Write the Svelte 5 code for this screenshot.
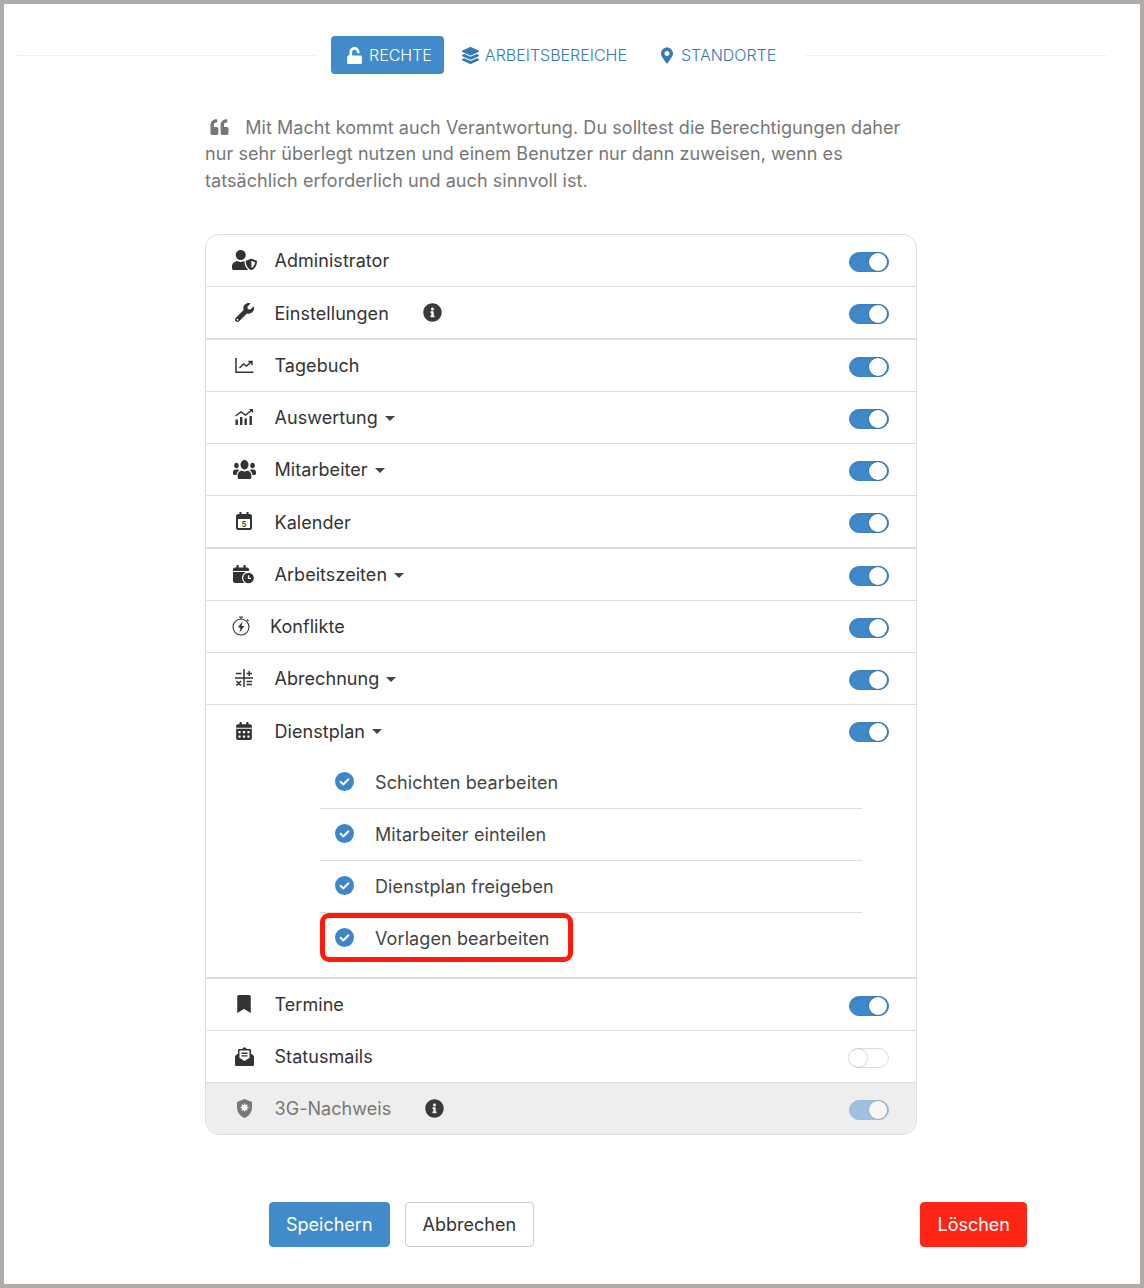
<script>
  const c = (x, y, r) => `M${x - r} ${y}a${r} ${r} 0 1 0 ${r * 2} 0a${r} ${r} 0 1 0 ${-r * 2} 0z`;

  const fa = (w, h, vb, d) => ({ w, h, vb, parts: [{ cls: 'f', d }] });

  const calendarAlt = 'M0 464c0 26.5 21.5 48 48 48h352c26.5 0 48-21.5 48-48V192H0v272zm320-196c0-6.6 5.4-12 12-12h40c6.6 0 12 5.4 12 12v40c0 6.6-5.4 12-12 12h-40c-6.6 0-12-5.4-12-12v-40zm0 128c0-6.6 5.4-12 12-12h40c6.6 0 12 5.4 12 12v40c0 6.6-5.4 12-12 12h-40c-6.6 0-12-5.4-12-12v-40zM192 268c0-6.6 5.4-12 12-12h40c6.6 0 12 5.4 12 12v40c0 6.6-5.4 12-12 12h-40c-6.6 0-12-5.4-12-12v-40zm0 128c0-6.6 5.4-12 12-12h40c6.6 0 12 5.4 12 12v40c0 6.6-5.4 12-12 12h-40c-6.6 0-12-5.4-12-12v-40zM64 268c0-6.6 5.4-12 12-12h40c6.6 0 12 5.4 12 12v40c0 6.6-5.4 12-12 12H76c-6.6 0-12-5.4-12-12v-40zm0 128c0-6.6 5.4-12 12-12h40c6.6 0 12 5.4 12 12v40c0 6.6-5.4 12-12 12H76c-6.6 0-12-5.4-12-12v-40zM400 64h-48V16c0-8.8-7.2-16-16-16h-32c-8.8 0-16 7.2-16 16v48H160V16c0-8.8-7.2-16-16-16h-32c-8.8 0-16 7.2-16 16v48H48C21.5 64 0 85.5 0 112v48h448v-48c0-26.5-21.5-48-48-48z';
  const infoCircle = 'M256 8C119.043 8 8 119.083 8 256c0 136.997 111.043 248 248 248s248-111.003 248-248C504 119.083 392.957 8 256 8zm0 110c23.196 0 42 18.804 42 42s-18.804 42-42 42-42-18.804-42-42 18.804-42 42-42zm56 254c0 6.627-5.373 12-12 12h-88c-6.627 0-12-5.373-12-12v-24c0-6.627 5.373-12 12-12h12v-64h-12c-6.627 0-12-5.373-12-12v-24c0-6.627 5.373-12 12-12h64c6.627 0 12 5.373 12 12v100h12c6.627 0 12 5.373 12 12v24z';

  const icons = {
    userShield: fa(25, 20, '0 0 640 512', 'M622.3 271.1l-115.2-45c-4.1-1.6-12.6-3.7-22.2 0l-115.2 45c-10.7 4.2-17.7 14-17.7 24.9 0 111.6 68.7 188.8 132.9 213.9 9.6 3.7 18 1.6 22.2 0C558.4 489.9 640 420.5 640 296c0-10.9-7-20.7-17.7-24.9zM496 462.4V273.3l95.5 37.3c-5.6 87.1-60.9 135.4-95.5 151.8zM224 256c70.7 0 128-57.3 128-128S294.7 0 224 0 96 57.3 96 128s57.3 128 128 128zm96 40c0-2.5.8-4.8 1.1-7.2-2.5-.1-4.9-.8-7.5-.8h-16.7c-22.2 10.2-46.9 16-72.9 16s-50.6-5.8-72.9-16h-16.7C60.2 288 0 348.2 0 422.4V464c0 26.5 21.5 48 48 48h352c6.2 0 12.1-1.3 17.5-3.4C369.3 476.2 320 402.2 320 296z'),
    wrench: fa(19, 19, '0 0 512 512', 'M507.73 109.1c-2.24-9.03-13.54-12.09-20.12-5.51l-74.36 74.36-67.88-11.31-11.31-67.88 74.36-74.36c6.62-6.62 3.43-17.9-5.66-20.16-47.38-11.74-99.55.91-136.58 37.93-39.64 39.64-50.55 97.1-34.05 147.2L18.74 402.76c-24.99 24.99-24.99 65.51 0 90.5 24.99 24.99 65.51 24.99 90.5 0l213.21-213.21c50.12 16.71 107.47 5.68 147.37-34.22 37.07-37.07 49.7-89.32 37.91-136.73zM64 472c-13.25 0-24-10.75-24-24 0-13.26 10.75-24 24-24s24 10.74 24 24c0 13.25-10.75 24-24 24z'),
    chartLine: {
      w: 19, h: 15, vb: '0 0 19 15',
      parts: [
        { cls: 's', d: 'M1 0V14.2H18.5' },
        { cls: 's', d: 'M4.5 10L8.5 6L11.5 8L16.5 3.8M13.3 3.5H17V7' }
      ]
    },
    chartMixed: {
      w: 18, h: 16, vb: '0 0 18 16',
      parts: [
        { cls: 'f', d: 'M0.5 10.5h2.4V16H.5zM5 8h2.4v8H5zM9.5 9.5h2.4V16H9.5zM14.5 7h2.4v9h-2.4z' },
        { cls: 's', d: 'M0.5 7L6 3L10.5 6L17 1' },
        { cls: 'f', d: 'M14 0h4v4z' }
      ]
    },
    calendarDay: {
      w: 16, h: 18, vb: '0 0 16 18',
      parts: [
        { cls: 's2', d: 'M1 4.5a1.5 1.5 0 0 1 1.5-1.5h11a1.5 1.5 0 0 1 1.5 1.5v11a1.5 1.5 0 0 1-1.5 1.5h-11a1.5 1.5 0 0 1-1.5-1.5z' },
        { cls: 'f', d: 'M0 3h16v4H0zM3.5 0h2v4h-2zM10.5 0h2v4h-2z' }
      ],
      label: '5'
    },
    calendarClock: {
      w: 22, h: 19, vb: '0 0 22 19',
      parts: [
        { cls: 'f', d: 'M0 4.5a2 2 0 0 1 2-2h12a2 2 0 0 1 2 2V6H0zM0 7h16v11H2a2 2 0 0 1-2-2zM3.5 0h2.2v4h-2.2zM10.5 0h2.2v4h-2.2z' },
        { cls: 'w', d: c(15.5, 13, 6.5) },
        { cls: 'f', d: c(15.5, 13, 5.3) },
        { cls: 'ws', d: 'M15.5 10.2V13.3H18' }
      ]
    },
    stopwatchBolt: {
      w: 19, h: 20, vb: '0 0 19 20',
      parts: [
        { cls: 'st', d: c(9, 11, 8) },
        { cls: 'st', d: 'M7 1h4M9 1v2M15 3.5l1.5 1.5' },
        { cls: 'f', d: 'M10.5 5.5L5.8 11.5H8.5L7.5 16.5L12.4 10H9.6z' }
      ]
    },
    calcSimple: {
      w: 18, h: 18, vb: '0 0 18 18',
      parts: [
        { cls: 's', d: 'M9 0v18M0 9h18' },
        { cls: 's', d: 'M1 4.5h5.5M11.5 4.5h5.5M14.2 2v5M11.5 12.5h5.5M11.5 15.5h5.5M1.5 12l4.5 4.5M6 12l-4.5 4.5' }
      ]
    },
    calendarAlt: fa(16, 18, '0 0 448 512', calendarAlt),
    bookmark: fa(14, 18, '0 0 384 512', 'M0 512V48C0 21.49 21.49 0 48 0h288c26.51 0 48 21.49 48 48v464L192 400 0 512z'),
    users: { ...fa(23, 19, '0 32 640 448', 'M96 224c35.3 0 64-28.7 64-64s-28.7-64-64-64-64 28.7-64 64 28.7 64 64 64zm448 0c35.3 0 64-28.7 64-64s-28.7-64-64-64-64 28.7-64 64 28.7 64 64 64zm32 32h-64c-17.6 0-33.5 7.1-45.1 18.6 40.3 22.1 68.9 62 75.1 109.4h66c17.7 0 32-14.3 32-32v-32c0-35.3-28.7-64-64-64zm-256 0c61.9 0 112-50.1 112-112S381.9 32 320 32 208 82.1 208 144s50.1 112 112 112zm76.8 32h-8.3c-20.8 10-43.9 16-68.5 16s-47.6-6-68.5-16h-8.3C179.6 288 128 339.6 128 403.2V432c0 26.5 21.5 48 48 48h288c26.5 0 48-21.5 48-48v-28.8c0-63.6-51.6-115.2-115.2-115.2zm-223.7-13.4C161.5 263.1 145.6 256 128 256H64c-35.3 0-64 28.7-64 64v32c0 17.7 14.3 32 32 32h65.9c6.3-47.4 34.9-87.3 75.2-109.4z'), stretch: true },
    envelopeOpen: {
      w: 19, h: 19, vb: '0 0 19 19',
      parts: [
        { cls: 'f', d: 'M9.5 0L12 2H15a1 1 0 0 1 1 1V6.5L19 9V17.5a1.5 1.5 0 0 1-1.5 1.5h-16A1.5 1.5 0 0 1 0 17.5V9L3 6.5V3a1 1 0 0 1 1-1H7z' },
        { cls: 'w', d: 'M4.5 3.6H14.5V10.8L9.5 14L4.5 10.8z' },
        { cls: 'f', d: 'M6.5 5.6h6v1.3h-6zM6.5 8.2h6v1.3h-6z' }
      ]
    },
    shieldVirus: {
      w: 17, h: 19, vb: '0 0 17 19',
      parts: [
        { cls: 'f', d: 'M8.5 0L16 3V8.5C16 13.5 12.5 17.5 8.5 19C4.5 17.5 1 13.5 1 8.5V3z' },
        { cls: 'w', d: c(8.5, 8.5, 2.8) },
        { cls: 'ws', d: 'M8.5 4.5v8M4.5 8.5h8M5.7 5.7l5.6 5.6M11.3 5.7l-5.6 5.6' }
      ]
    }
  };

  const rows = [
    { label: 'Administrator', icon: 'userShield', on: true },
    { label: 'Einstellungen', icon: 'wrench', on: true, info: true, thick: true },
    { label: 'Tagebuch', icon: 'chartLine', on: true },
    { label: 'Auswertung', icon: 'chartMixed', on: true, caret: true },
    { label: 'Mitarbeiter', icon: 'users', on: true, caret: true },
    { label: 'Kalender', icon: 'calendarDay', on: true, thick: true },
    { label: 'Arbeitszeiten', icon: 'calendarClock', on: true, caret: true },
    { label: 'Konflikte', icon: 'stopwatchBolt', on: true, tight: true },
    { label: 'Abrechnung', icon: 'calcSimple', on: true, caret: true },
    {
      label: 'Dienstplan', icon: 'calendarAlt', on: true, caret: true, thick: true,
      subs: ['Schichten bearbeiten', 'Mitarbeiter einteilen', 'Dienstplan freigeben', 'Vorlagen bearbeiten']
    },
    { label: 'Termine', icon: 'bookmark', on: true },
    { label: 'Statusmails', icon: 'envelopeOpen', on: false },
    { label: '3G-Nachweis', icon: 'shieldVirus', on: true, info: true, disabled: true }
  ];
</script>

{#snippet svgIcon(name)}
  {@const ic = icons[name]}
  <svg class="row-icon" width={ic.w} height={ic.h} viewBox={ic.vb} preserveAspectRatio={ic.stretch ? 'none' : 'xMidYMid meet'} aria-hidden="true">
    {#each ic.parts as p}
      <path class={p.cls} d={p.d} />
    {/each}
    {#if ic.label}
      <text class="icon-label" x="8" y="14.6" text-anchor="middle">{ic.label}</text>
    {/if}
  </svg>
{/snippet}

<div class="frame">
  <nav class="tabs">
    <span class="rule"></span>
    <a class="tab active" href="#rechte">
      <svg width="15" height="17" viewBox="0 0 448 512"><path d="M400 256H152V152.9c0-39.6 31.7-72.5 71.3-72.9 40-.4 72.7 32.1 72.7 72v16c0 13.3 10.7 24 24 24h32c13.3 0 24-10.7 24-24v-16C376 68 307.5-.3 223.5 0 139.5.3 72 69.5 72 153.5V256H48c-26.5 0-48 21.5-48 48v160c0 26.5 21.5 48 48 48h352c26.5 0 48-21.5 48-48V304c0-26.5-21.5-48-48-48z" /></svg>
      RECHTE
    </a>
    <a class="tab" href="#arbeitsbereiche">
      <svg width="17" height="17" viewBox="0 0 512 512"><path d="M12.41 148.02l232.94 105.67c6.8 3.09 14.49 3.09 21.29 0l232.94-105.67c16.55-7.51 16.55-32.52 0-40.03L266.65 2.31a25.607 25.607 0 0 0-21.29 0L12.41 107.98c-16.55 7.51-16.55 32.53 0 40.04zm487.18 88.28l-58.09-26.33-161.64 73.27c-7.56 3.43-15.59 5.17-23.86 5.17s-16.29-1.74-23.86-5.17L70.51 209.97l-58.1 26.33c-16.55 7.5-16.55 32.5 0 40l232.94 105.59c6.8 3.08 14.49 3.08 21.29 0L499.59 276.3c16.55-7.5 16.55-32.5 0-40zm0 127.8l-57.87-26.23-161.86 73.37c-7.56 3.43-15.59 5.17-23.86 5.17s-16.29-1.74-23.86-5.17L70.29 337.87 12.41 364.1c-16.55 7.5-16.55 32.5 0 40l232.94 105.59c6.8 3.08 14.49 3.08 21.29 0L499.59 404.1c16.55-7.5 16.55-32.5 0-40z" /></svg>
      ARBEITSBEREICHE
    </a>
    <a class="tab wide-gap" href="#standorte">
      <svg width="12" height="17" viewBox="0 0 384 512"><path d="M172.268 501.67C26.97 291.031 0 262.529 0 192 0 85.961 85.961 0 192 0s192 85.961 192 192c0 70.529-26.97 99.031-172.268 309.67-9.535 13.774-29.93 13.773-39.464 0zM192 272c44.183 0 80-35.817 80-80s-35.817-80-80-80-80 35.817-80 80 35.817 80 80 80z" /></svg>
      STANDORTE
    </a>
    <span class="rule"></span>
  </nav>

  <main class="content">
    <p class="quote">
      <svg class="quote-mark" width="23" height="18" viewBox="0 0 512 512"><path d="M464 256h-80v-64c0-35.3 28.7-64 64-64h8c13.3 0 24-10.7 24-24V56c0-13.3-10.7-24-24-24h-8c-88.4 0-160 71.6-160 160v240c0 26.5 21.5 48 48 48h128c26.5 0 48-21.5 48-48V304c0-26.5-21.5-48-48-48zm-288 0H96v-64c0-35.3 28.7-64 64-64h8c13.3 0 24-10.7 24-24V56c0-13.3-10.7-24-24-24h-8C71.6 32 0 103.6 0 192v240c0 26.5 21.5 48 48 48h128c26.5 0 48-21.5 48-48V304c0-26.5-21.5-48-48-48z" /></svg>
      Mit Macht kommt auch Verantwortung. Du solltest die Berechtigungen daher nur sehr überlegt nutzen und einem Benutzer nur dann zuweisen, wenn es tatsächlich erforderlich und auch sinnvoll ist.
    </p>

    <ul class="list">
      {#each rows as row}
        <li class="item" class:thick={row.thick} class:disabled={row.disabled}>
          <div class="row">
            <span class="icon-slot" class:tight={row.tight}>{@render svgIcon(row.icon)}</span>
            <span class="label">{row.label}</span>
            {#if row.caret}<span class="caret"></span>{/if}
            {#if row.info}
              <svg class="info" width="19" height="19" viewBox="0 0 512 512"><path d={infoCircle} /></svg>
            {/if}
            <span class="toggle" class:on={row.on}><span class="knob"></span></span>
          </div>
          {#if row.subs}
            <ul class="subs">
              {#each row.subs as sub, i}
                <li class="sub">
                  <svg class="check" width="19" height="19" viewBox="0 0 19 19">
                    <circle cx="9.5" cy="9.5" r="9.5" />
                    <path d="M5.6 9.8L8.4 12.4L13.4 7.2" />
                  </svg>
                  {sub}
                  {#if i === row.subs.length - 1}<span class="highlight"></span>{/if}
                </li>
              {/each}
            </ul>
          {/if}
        </li>
      {/each}
    </ul>
  </main>

  <footer class="actions">
    <button class="btn primary">Speichern</button>
    <button class="btn">Abbrechen</button>
    <button class="btn danger">Löschen</button>
  </footer>
</div>

<style>
  :global(body) {
    font-family: Inter, "Liberation Sans", sans-serif;
    color: #333;
  }

  .frame {
    box-sizing: border-box;
    height: 1288px;
    border: 4px solid #b0acaa;
    background: #fff;
    padding-top: 32px;
  }

  .tabs {
    display: flex;
    align-items: center;
    gap: 2px;
    padding: 0 34px 0 13px;
  }

  .rule {
    flex: 1;
    height: 1px;
    background: #eee;
  }

  .rule:first-child {
    flex: none;
    width: 298px;
    margin-right: 14px;
  }

  .rule:last-child {
    margin-left: 12px;
  }

  .tab {
    display: flex;
    align-items: center;
    gap: 6px;
    height: 38px;
    padding: 0 16px;
    border-radius: 4px;
    color: #337ab7;
    font-size: 16px;
    font-weight: 350;
    text-decoration: none;
  }

  .tab svg {
    fill: currentColor;
  }

  .tab.wide-gap {
    gap: 8px;
  }

  .tab.active {
    padding-right: 12px;
    gap: 7px;
    background: #428bca;
    color: #fff;
    font-weight: 300;
  }

  .content {
    width: 712px;
    margin: 40.6px 0 0 201px;
  }

  .quote {
    margin: 0 0 39.6px;
    font-size: 18px;
    line-height: 26.6px;
    letter-spacing: 0.07px;
    color: #777;
  }

  .quote-mark {
    fill: #777;
    margin: 0 9px 0 3px;
    vertical-align: -2px;
  }

  .list {
    list-style: none;
    margin: 0;
    padding: 0;
    border: 1px solid #ddd;
    border-radius: 14px;
    overflow: hidden;
  }

  .item {
    border-bottom: 1px solid #ddd;
    font-size: 18px;
    letter-spacing: 0.05px;
  }

  .item:last-child {
    border-bottom: 0;
  }

  .item.thick {
    border-bottom-width: 2px;
  }

  .item.thick > .row > .label {
    margin-top: 2px;
  }

  .item.disabled {
    background: #eee;
    color: #777;
  }

  .row {
    display: flex;
    align-items: center;
    box-sizing: border-box;
    height: 51px;
    padding-right: 27px;
  }

  .item:has(.subs) .row {
    height: 52px;
  }

  .icon-slot {
    display: flex;
    justify-content: center;
    flex: none;
    width: 26px;
    margin: 0 17.5px 0 25px;
    color: #333;
  }

  .disabled .icon-slot {
    color: #777;
  }

  .icon-slot.tight {
    margin: 0 16px 0 22px;
  }

  .row-icon .f {
    fill: currentColor;
  }

  .row-icon .w {
    fill: #fff;
  }

  .row-icon .s,
  .row-icon .s2,
  .row-icon .st,
  .row-icon .ws {
    fill: none;
    stroke: currentColor;
    stroke-width: 1.5;
  }

  .row-icon .s2 {
    stroke-width: 2;
  }

  .row-icon .st {
    stroke-width: 1.1;
  }

  .row-icon .ws {
    stroke: #fff;
    stroke-width: 1.2;
  }

  .icon-label {
    font-family: Inter, sans-serif;
    font-size: 7px;
    font-weight: 700;
    fill: currentColor;
  }

  .caret {
    width: 0;
    height: 0;
    margin: 2px 0 0 7px;
    border-left: 5.5px solid transparent;
    border-right: 5.5px solid transparent;
    border-top: 5.5px solid #444;
  }

  .info {
    margin-left: 34px;
    fill: #3a3a3a;
  }

  .toggle {
    box-sizing: border-box;
    position: relative;
    width: 40px;
    height: 20px;
    margin: 3px 0 0 auto;
    border: 1px solid #ddd;
    border-radius: 10px;
    background: #fff;
    box-shadow: inset 0 1px 2px rgba(0, 0, 0, 0.04);
  }

  .toggle.on {
    border-color: #3b82c4;
    background: #3f88c9;
  }

  .disabled .toggle {
    opacity: 0.45;
  }

  .knob {
    position: absolute;
    top: 0;
    left: -1px;
    width: 18px;
    height: 18px;
    border-radius: 50%;
    background: #fff;
    box-shadow: 0 0 2px rgba(0, 0, 0, 0.4);
  }

  .toggle.on .knob {
    left: 19px;
  }

  .disabled .toggle .knob {
    box-shadow: 0 0 2px rgba(0, 0, 0, 0.6);
  }

  .subs {
    list-style: none;
    margin: 0 54px 0 114px;
    padding: 0 0 12px;
  }

  .sub {
    position: relative;
    display: flex;
    align-items: center;
    box-sizing: border-box;
    height: 52px;
    border-bottom: 1px solid #ddd;
    color: #444;
    letter-spacing: 0.1px;
  }

  .sub:last-child {
    border-bottom-color: transparent;
  }

  .check {
    margin: -2px 21px 0 15px;
  }

  .check circle {
    fill: #3c86c9;
  }

  .check path {
    fill: none;
    stroke: #fff;
    stroke-width: 2;
    stroke-linecap: round;
    stroke-linejoin: round;
  }

  .highlight {
    position: absolute;
    top: 0;
    left: 0;
    box-sizing: border-box;
    width: 253px;
    height: 49px;
    border: 5px solid #ff1a0a;
    border-radius: 9px;
  }

  .actions {
    display: flex;
    gap: 15px;
    margin: 67px 113px 0 265px;
  }

  .btn {
    height: 45px;
    padding: 0 17px;
    border: 1px solid #ccc;
    border-radius: 4px;
    background: #fff;
    color: #333;
    font: 18px Inter, sans-serif;
  }

  .btn.primary {
    padding: 0 16px;
    border-color: #428bca;
    background: #428bca;
    color: #fff;
  }

  .btn.danger {
    padding: 0 16px;
    margin-left: auto;
    border-color: #ff2517;
    background: #ff2517;
    color: #fff;
  }
</style>
